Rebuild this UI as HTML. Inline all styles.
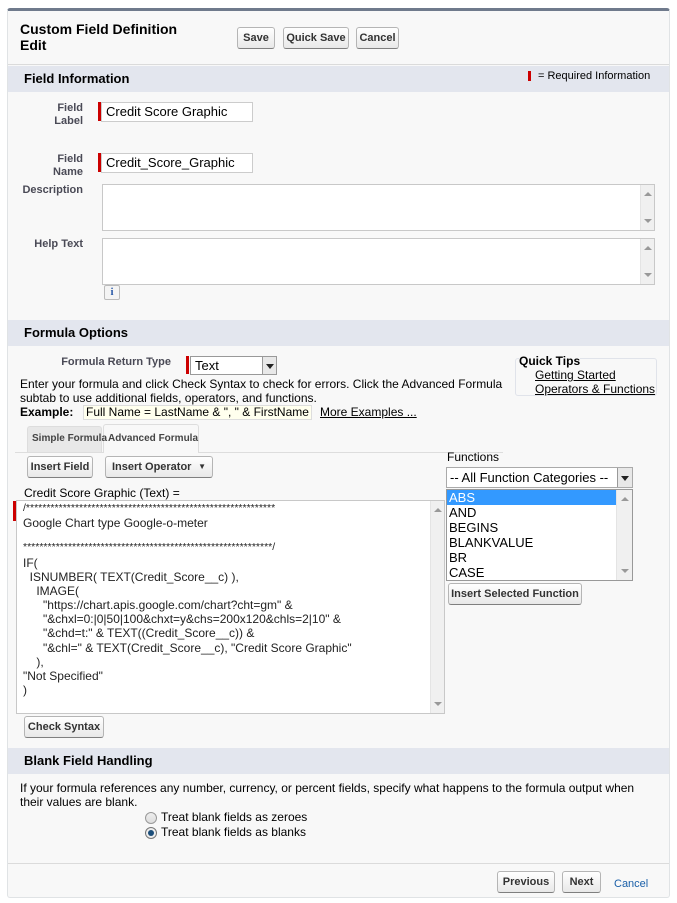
<!DOCTYPE html>
<html><head><meta charset="utf-8"><style>
*{margin:0;padding:0;box-sizing:border-box}
body{width:677px;height:903px;background:#fff;font-family:"Liberation Sans",Arial,sans-serif;font-size:12px;color:#000;position:relative;overflow:hidden}
.a{position:absolute;white-space:nowrap}
.panel{left:7px;top:8px;width:663px;height:890px;background:#f8f8f8;border:1px solid #e0e3e5;border-top:3px solid #6f7a8c;border-radius:3px}
.btn{position:absolute;height:22px;border:1px solid #b5b5b5;border-bottom-color:#7f7f7f;border-radius:3px;background:linear-gradient(#fff,#e8e8e8);font-weight:bold;font-size:11px;color:#333;text-align:center;line-height:20px;white-space:nowrap}
.band{position:absolute;left:8px;width:661px;height:26px;background:#e3e6ee;font-weight:bold;font-size:13px;line-height:26px;padding-left:16px}
.lbl{position:absolute;font-size:11px;font-weight:bold;color:#4a4a56;text-align:right}
.inp{position:absolute;background:#fff;border:1px solid #ccc;font-size:13px;padding-left:4px;line-height:17px;white-space:nowrap}
.red{position:absolute;background:#c00;width:3px}
.ta{position:absolute;background:#fff;border:1px solid #c8c8c8}
.sb{position:absolute;right:0;top:0;bottom:0;width:14px;background:#f0f0f0;border-left:1px solid #e4e4e4}
.up,.dn{position:absolute;left:3px;width:0;height:0;border-left:4px solid transparent;border-right:4px solid transparent}
.up{border-bottom:4px solid #999;top:7px}.dn{border-top:4px solid #999;bottom:7px}
a{color:#000;text-decoration:underline}
.code{font-size:12px;line-height:14.1px;white-space:pre;color:#222}
.tab{font-weight:bold;font-size:10px;color:#444}
</style></head><body>
<div class="a panel"></div>
<div class="a" style="left:20px;top:21px;font-weight:bold;font-size:14px;line-height:16px">Custom Field Definition<br>Edit</div>
<div class="btn" style="left:237px;top:27px;width:38px">Save</div>
<div class="btn" style="left:283px;top:27px;width:66px">Quick Save</div>
<div class="btn" style="left:356px;top:27px;width:43px">Cancel</div>
<div class="a" style="left:8px;top:64px;width:661px;height:1px;background:#dbdbdb"></div>

<div class="band" style="top:66px">Field Information</div>
<div class="red" style="left:528px;top:71px;height:10px"></div>
<div class="a" style="left:538px;top:70px;font-size:11px">= Required Information</div>

<div class="lbl" style="left:30px;top:102px;width:53px;line-height:13px">Field<br>Label</div>
<div class="red" style="left:98px;top:102px;height:19px"></div>
<div class="inp" style="left:101px;top:102px;width:152px;height:20px">Credit Score Graphic</div>
<div class="lbl" style="left:30px;top:153px;width:53px;line-height:13px">Field<br>Name</div>
<div class="red" style="left:98px;top:153px;height:19px"></div>
<div class="inp" style="left:101px;top:153px;width:152px;height:20px">Credit_Score_Graphic</div>
<div class="lbl" style="left:10px;top:184px;width:73px">Description</div>
<div class="ta" style="left:102px;top:184px;width:553px;height:47px"><div class="sb"><div class="up"></div><div class="dn"></div></div></div>
<div class="lbl" style="left:10px;top:238px;width:73px">Help Text</div>
<div class="ta" style="left:102px;top:238px;width:553px;height:47px"><div class="sb"><div class="up"></div><div class="dn"></div></div></div>
<div class="a" style="left:104px;top:285px;width:16px;height:15px;border:1px solid #bbb;border-radius:2px;background:#f4f4f4;color:#2b5aa8;font-family:'Liberation Serif',serif;font-weight:bold;font-size:11px;text-align:center;line-height:13px">i</div>

<div class="band" style="top:320px">Formula Options</div>
<div class="lbl" style="left:40px;top:356px;width:131px">Formula Return Type</div>
<div class="red" style="left:186px;top:356px;height:18px"></div>
<div class="inp" style="left:190px;top:356px;width:87px;height:19px;border-color:#999;font-size:13px">Text<div class="a" style="right:0;top:0;width:14px;height:17px;background:#e8e8e8;border-left:1px solid #999"><div class="a" style="left:3px;top:7px;border-left:4px solid transparent;border-right:4px solid transparent;border-top:5px solid #222"></div></div></div>
<div class="a" style="left:515px;top:358px;width:142px;height:38px;border:1px solid #e0e3ea;border-radius:3px"></div>
<div class="a" style="left:519px;top:354px;font-weight:bold;font-size:12px;background:#f8f8f8">Quick Tips</div>
<div class="a" style="left:535px;top:368px;line-height:14px"><a>Getting Started</a><br><a>Operators &amp; Functions</a></div>
<div class="a" style="left:20px;top:377px;line-height:14px;width:490px;white-space:normal">Enter your formula and click Check Syntax to check for errors. Click the Advanced Formula subtab to use additional fields, operators, and functions.</div>
<div class="a" style="left:20px;top:405px;font-weight:bold">Example:</div>
<div class="a" style="left:83px;top:405px;border:1px solid #ddd;background:#ffe;padding:0 2px;line-height:13px">Full Name = LastName &amp; ", " &amp; FirstName</div>
<div class="a" style="left:320px;top:405px"><a>More Examples ...</a></div>

<div class="a" style="left:27px;top:426px;width:75px;height:26px;background:#e8e8e8;border:1px solid #ddd;border-bottom:none;border-radius:3px 3px 0 0"></div>
<div class="a" style="left:103px;top:424px;width:96px;height:29px;background:#f8f8f8;border:1px solid #ddd;border-bottom:none;border-radius:3px 3px 0 0"></div>
<div class="a tab" style="left:32px;top:433px">Simple Formula</div>
<div class="a tab" style="left:108px;top:433px">Advanced Formula</div>
<div class="a" style="left:15px;top:452px;width:88px;height:1px;background:#ddd"></div>
<div class="a" style="left:199px;top:452px;width:304px;height:1px;background:#ddd"></div>
<div class="btn" style="left:27px;top:456px;width:66px">Insert Field</div>
<div class="btn" style="left:105px;top:456px;width:108px;text-align:left;padding-left:6px">Insert Operator <span style="position:absolute;right:6px;top:0;font-size:8px">▼</span></div>
<div class="a" style="left:24px;top:486px">Credit Score Graphic (Text) =</div>

<div class="a" style="left:447px;top:450px">Functions</div>
<div class="inp" style="left:446px;top:467px;width:187px;height:21px;border-color:#aaa;font-size:13px;line-height:19px;padding-left:3px">-- All Function Categories --<div class="a" style="right:0;top:0;width:15px;height:19px;background:#e8e8e8;border-left:1px solid #999"><div class="a" style="left:3px;top:8px;border-left:4px solid transparent;border-right:4px solid transparent;border-top:5px solid #222"></div></div></div>
<div class="a" style="left:446px;top:489px;width:187px;height:92px;background:#fff;border:1px solid #999;font-size:13px;line-height:15px">
<div style="background:#3399ff;color:#fff;width:169px;padding-left:2px">ABS</div>
<div style="padding-left:2px">AND<br>BEGINS<br>BLANKVALUE<br>BR<br>CASE</div>
<div class="sb" style="width:16px;background:#f0f0f0"><div class="up" style="left:4px"></div><div class="dn" style="left:4px"></div></div>
</div>
<div class="btn" style="left:448px;top:583px;width:134px">Insert Selected Function</div>

<div class="red" style="left:13px;top:501px;height:20px"></div>
<div class="ta" style="left:16px;top:500px;width:429px;height:214px"><div class="sb"><div class="up"></div><div class="dn"></div></div>
<div class="code a" style="left:6px;top:2px;font-size:10.5px;line-height:10px">/*************************************************************</div>
<div class="code a" style="left:6px;top:15px">Google Chart type Google-o-meter</div>
<div class="code a" style="left:6px;top:41px;font-size:10.5px;line-height:10px">*************************************************************/</div>
<div class="code a" style="left:6px;top:55px">IF(
  ISNUMBER( TEXT(Credit_Score__c) ),
    IMAGE(
      "https://chart.apis.google.com/chart?cht=gm" &amp;
      "&amp;chxl=0:|0|50|100&amp;chxt=y&amp;chs=200x120&amp;chls=2|10" &amp;
      "&amp;chd=t:" &amp; TEXT((Credit_Score__c)) &amp;
      "&amp;chl=" &amp; TEXT(Credit_Score__c), "Credit Score Graphic"
    ),
"Not Specified"
)</div>
</div>
<div class="btn" style="left:24px;top:716px;width:80px">Check Syntax</div>

<div class="band" style="top:748px">Blank Field Handling</div>
<div class="a" style="left:20px;top:781px;line-height:14px;width:640px;white-space:normal">If your formula references any number, currency, or percent fields, specify what happens to the formula output when their values are blank.</div>
<div class="a" style="left:145px;top:812px;width:12px;height:12px;border:1px solid #999;border-radius:50%;background:linear-gradient(#eee,#ddd)"></div>
<div class="a" style="left:161px;top:810px">Treat blank fields as zeroes</div>
<div class="a" style="left:145px;top:827px;width:12px;height:12px;border:1px solid #777;border-radius:50%;background:#eee"><div class="a" style="left:2px;top:2px;width:6px;height:6px;border-radius:50%;background:#1c4e7a"></div></div>
<div class="a" style="left:161px;top:825px">Treat blank fields as blanks</div>

<div class="a" style="left:8px;top:863px;width:661px;height:1px;background:#dbdbdb"></div>
<div class="btn" style="left:497px;top:871px;width:58px">Previous</div>
<div class="btn" style="left:562px;top:871px;width:39px">Next</div>
<div class="a" style="left:614px;top:878px;color:#1a5fa8;font-size:11px">Cancel</div>
</body></html>
